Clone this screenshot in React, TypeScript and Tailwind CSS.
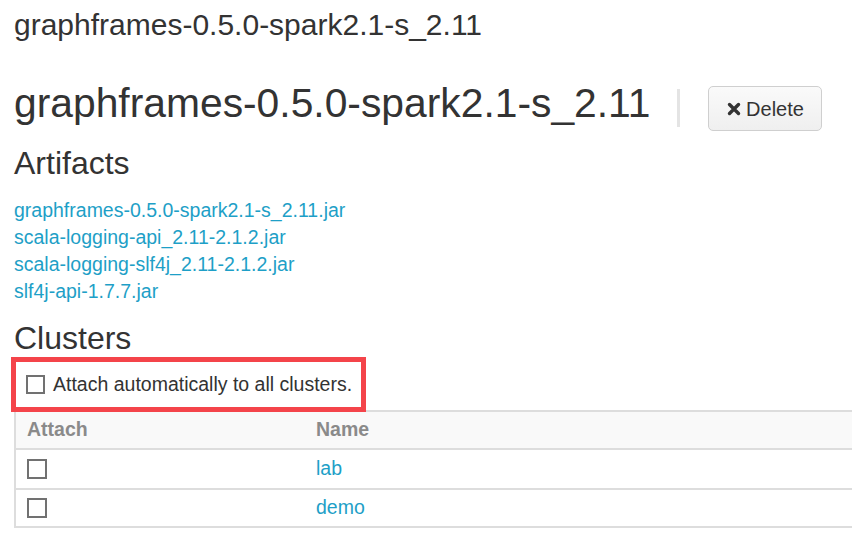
import React from 'react';

const artifacts = [
  'graphframes-0.5.0-spark2.1-s_2.11.jar',
  'scala-logging-api_2.11-2.1.2.jar',
  'scala-logging-slf4j_2.11-2.1.2.jar',
  'slf4j-api-1.7.7.jar',
];

const clusters = [
  { name: 'lab', rowClass: 'h-[40px]' },
  { name: 'demo', rowClass: 'h-[38px]' },
];

function Checkbox({ size = 'w-5 h-5' }: { size?: string }) {
  return <span className={`${size} border-2 border-[#717171] bg-white shrink-0`} />;
}

function TimesIcon() {
  return (
    <svg width="14" height="14" viewBox="0 0 14 14" className="shrink-0">
      <path d="M2.5 2.5 L11.5 11.5 M11.5 2.5 L2.5 11.5" stroke="#333" strokeWidth="3.4" strokeLinecap="round" />
    </svg>
  );
}

export default function App() {
  return (
    <div className="w-full overflow-hidden bg-white pl-[14px] text-[#333] font-['Liberation_Sans',Arial,sans-serif]">
      {/* Page title */}
      <div className="pt-[7px] text-[30px] leading-[36px]">graphframes-0.5.0-spark2.1-s_2.11</div>

      {/* Library header */}
      <div className="mt-[36px] flex items-start">
        <h1 className="text-[40.8px] leading-[48px] font-normal">graphframes-0.5.0-spark2.1-s_2.11</h1>
        <div className="ml-[27px] mt-[10px] w-[3px] h-[38px] bg-[#e4e4e4]" />
        <button className="ml-[28px] mt-[7px] flex items-center justify-center gap-[5px] w-[114px] h-[45px] rounded-[5px] border border-[#cfcfcf] bg-gradient-to-b from-[#fafafa] to-[#efefef] text-[20px] leading-none text-[#333]">
          <TimesIcon />
          <span>Delete</span>
        </button>
      </div>

      {/* Artifacts */}
      <h2 className="mt-[13px] text-[32px] leading-[38px] font-normal">Artifacts</h2>
      <ul className="mt-[15px] text-[19.5px] leading-[27px]">
        {artifacts.map((a) => (
          <li key={a}>
            <a className="text-[#1e9fc7]">{a}</a>
          </li>
        ))}
      </ul>

      {/* Clusters */}
      <h2 className="mt-[14px] text-[32px] leading-[38px] font-normal">Clusters</h2>
      <label className="relative z-10 ml-[-3px] flex items-center h-[55px] w-[355px] border-[5px] border-[#f4444a] pl-[10px] gap-[8px] text-[19.5px] leading-[27px]">
        <Checkbox size="w-[19px] h-[19px]" />
        <span>Attach automatically to all clusters.</span>
      </label>

      <div className="mt-[-2px] border-l-2 border-t-2 border-[#ddd] text-[19.5px]">
        <div className="grid grid-cols-[289px_1fr] h-[38px] items-center bg-[#f9f9f9] border-b-2 border-[#ddd] font-bold text-[#8a8a8a]">
          <div className="pl-[11px]">Attach</div>
          <div className="pl-[11px]">Name</div>
        </div>
        {clusters.map((c) => (
          <div key={c.name} className={`grid grid-cols-[289px_1fr] ${c.rowClass} items-center border-b-2 border-[#ddd]`}>
            <div className="pl-[11px] flex">
              <Checkbox />
            </div>
            <div className="pl-[11px]">
              <a className="text-[#1e9fc7]">{c.name}</a>
            </div>
          </div>
        ))}
      </div>
      <div className="h-[25px]" />
    </div>
  );
}
